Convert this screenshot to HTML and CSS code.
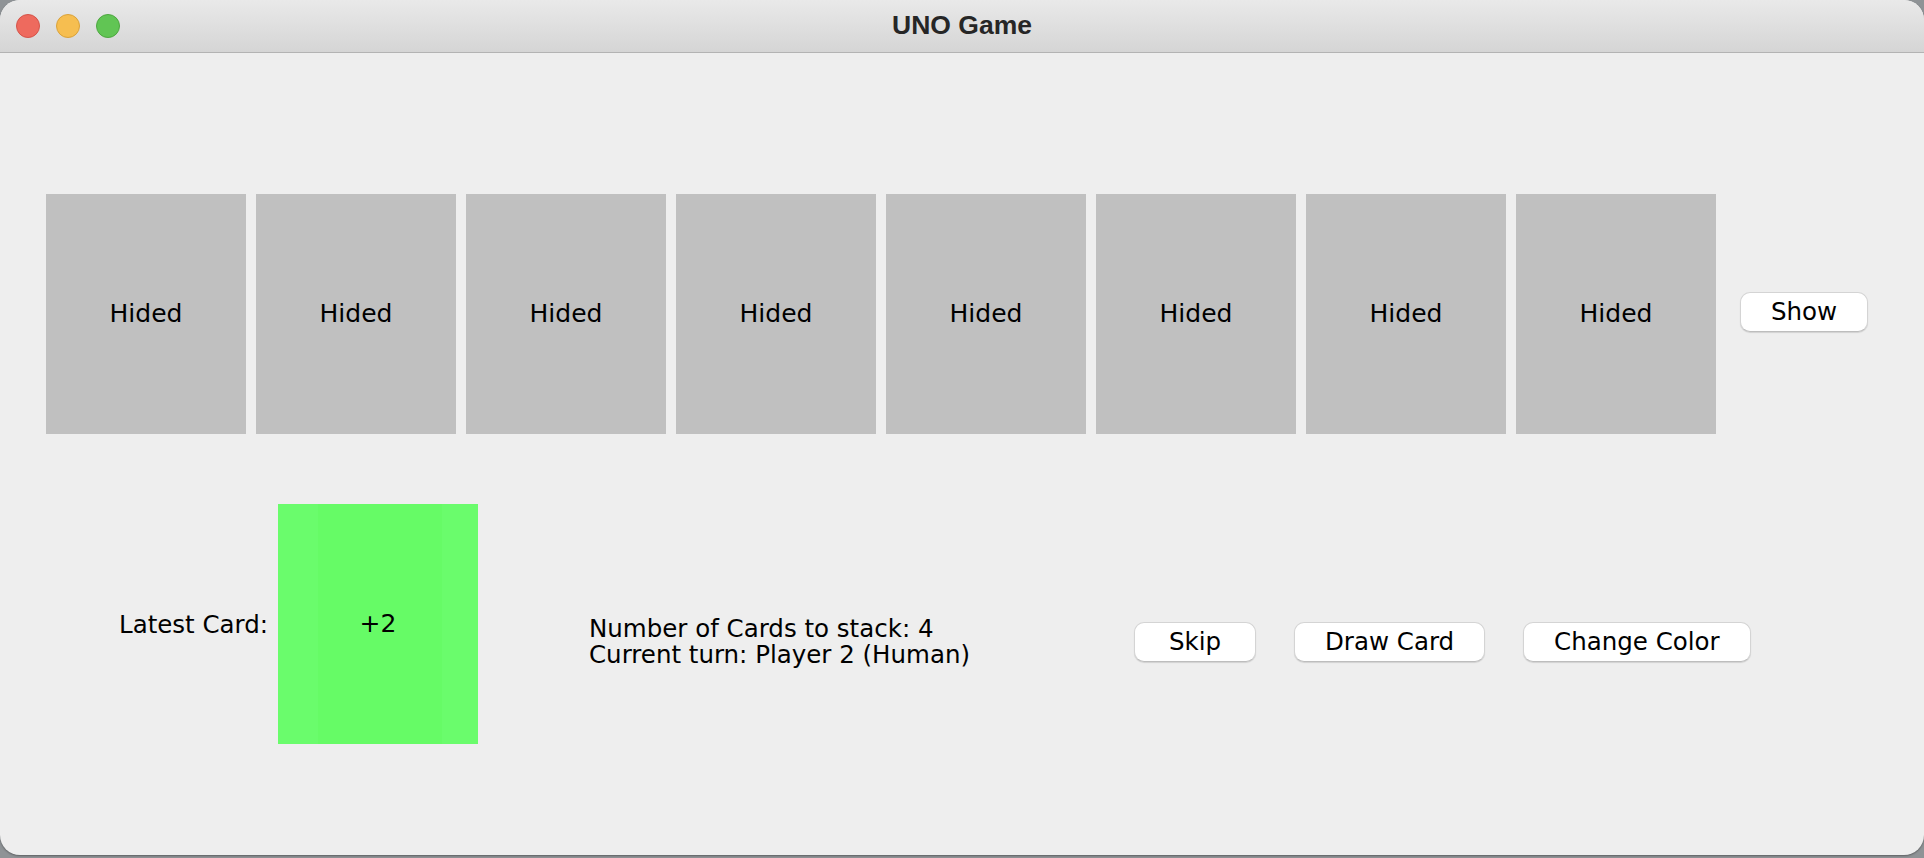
FILE: index.html
```html
<!DOCTYPE html>
<html lang="en">
<head>
<meta charset="utf-8">
<title>UNO Game</title>
<link rel="stylesheet" href="styles.css">
</head>
<body>
<div class="window">
  <header class="titlebar">
    <div class="lights">
      <span class="light red"></span>
      <span class="light yellow"></span>
      <span class="light green"></span>
    </div>
    <div class="title">UNO Game</div>
  </header>
  <main class="content">
    <section class="hand">
      <div class="card hidden">Hided</div>
      <div class="card hidden">Hided</div>
      <div class="card hidden">Hided</div>
      <div class="card hidden">Hided</div>
      <div class="card hidden">Hided</div>
      <div class="card hidden">Hided</div>
      <div class="card hidden">Hided</div>
      <div class="card hidden">Hided</div>
      <button class="btn show-btn">Show</button>
    </section>
    <section class="table">
      <div class="latest-label">Latest Card:</div>
      <div class="card latest">+2</div>
      <div class="info">
        <div>Number of Cards to stack: 4</div>
        <div>Current turn: Player 2 (Human)</div>
      </div>
      <div class="actions">
        <button class="btn">Skip</button>
        <button class="btn">Draw Card</button>
        <button class="btn">Change Color</button>
      </div>
    </section>
  </main>
</div>
</body>
</html>
```

FILE: styles.css
```css
html, body {
  margin: 0;
  padding: 0;
}
body {
  width: 1924px;
  height: 858px;
  background: #8f9396;
  overflow: hidden;
  font-family: "DejaVu Sans", "Liberation Sans", sans-serif;
}
.window {
  height: 855px;
  display: flex;
  flex-direction: column;
  background: #eeeeee;
  border-radius: 20px;
  overflow: hidden;
  box-shadow: 0 1px 2px rgba(0,0,0,0.35);
}
.titlebar {
  height: 52px;
  flex: none;
  position: relative;
  background: linear-gradient(#e9e9e9, #d5d5d5);
  border-bottom: 1px solid #b3b3b3;
  display: flex;
  align-items: center;
  justify-content: center;
}
.lights {
  position: absolute;
  left: 16px;
  top: 14px;
  display: flex;
  gap: 16px;
}
.light {
  width: 22px;
  height: 22px;
  border-radius: 50%;
  border: 1px solid transparent;
}
.light.red { background: #ee6a5e; border-color: #d4544a; }
.light.yellow { background: #f6be50; border-color: #d9a23b; }
.light.green { background: #61c554; border-color: #4ea640; }
.title {
  font-family: "Liberation Sans", Arial, sans-serif;
  font-weight: bold;
  font-size: 26.5px;
  line-height: 52px;
  color: #262626;
  padding-bottom: 2px;
}
.content {
  flex: 1;
  padding-top: 141px;
}
.hand {
  display: flex;
  align-items: center;
  gap: 10px;
  padding-left: 46px;
}
.card {
  width: 200px;
  height: 240px;
  flex: none;
  display: flex;
  align-items: center;
  justify-content: center;
  font-size: 25px;
  line-height: 30px;
  color: #000;
}
.card.hidden {
  background: #c0c0c0;
}
.btn {
  font-family: "DejaVu Sans", "Liberation Sans", sans-serif;
  font-size: 24.5px;
  line-height: 38px;
  height: 40px;
  min-width: 122px;
  padding: 0 30px;
  background: #ffffff;
  color: #000;
  border: 1px solid #d4d4d4;
  border-bottom-color: #bdbdbd;
  border-radius: 10px;
  box-shadow: 0 1px 1px rgba(0,0,0,0.12);
  flex: none;
}
.show-btn {
  margin-left: 14px;
  margin-bottom: 4px;
  min-width: 126px;
}
.table {
  display: flex;
  align-items: center;
  margin-top: 70px;
  padding-left: 119px;
}
.latest-label {
  width: 148px;
  padding-right: 11px;
  text-align: right;
  font-size: 24.5px;
  line-height: 30px;
  margin-top: 2px;
  white-space: nowrap;
  flex: none;
}
.card.latest {
  background: linear-gradient(90deg, #6afc6c 0, #6afc6c 40px, #66fb66 40px, #66fb66 164px, #6afc6c 164px);
}
.info {
  width: 545px;
  flex: none;
  margin-left: 111px;
  margin-top: 35px;
  font-size: 24.5px;
  line-height: 26px;
  white-space: nowrap;
}
.actions {
  display: flex;
  gap: 38px;
  margin-top: 36px;
}
```
